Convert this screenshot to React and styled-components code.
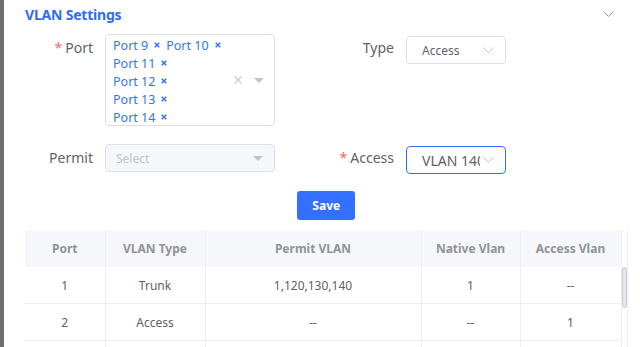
import React from 'react'
import styled, { createGlobalStyle } from 'styled-components';

const GlobalStyle = createGlobalStyle`
  html, body {
    margin: 0;
    padding: 0;
    background: #fff;
    overflow: hidden;
  }
  body {
    font-family: "Noto Sans", "Noto Sans CJK SC", sans-serif;
    color: #606266;
  }
`;

const Page = styled.div`
  display: flex;
  align-items: flex-start;
  min-height: 100vh;
`;

const SideStrip = styled.div`
  width: 4px;
  flex: none;
  align-self: stretch;
  background: #6f6f6f;
`;

const Main = styled.div`
  flex: 1;
  padding: 0 13px 0 21px;
`;

const Header = styled.div`
  height: 28px;
  display: flex;
  align-items: center;
  justify-content: space-between;
  margin-bottom: 6px;
`;

const Title = styled.div`
  font-size: 14px;
  font-weight: 700;
  color: #2f6cf2;
  letter-spacing: -0.2px;
`;

const Collapse = styled.svg`
  width: 11px;
  height: 6px;
  margin-right: 14px;
`;

const Form = styled.div`
  display: grid;
  grid-template-columns: 250px 192px;
  column-gap: 39px;
  row-gap: 18px;
`;

const FormItem = styled.div`
  display: flex;
  align-items: flex-start;
`;

const Label = styled.div`
  width: ${p => p.width}px;
  margin-right: 12px;
  text-align: right;
  font-size: 14px;
  line-height: 28px;
  color: #606266;
  white-space: nowrap;
`;

const Required = styled.span`
  color: #f56c6c;
  margin-right: 3px;
`;

const MultiSelect = styled.div`
  width: 170px;
  height: 92px;
  box-sizing: border-box;
  border: 1px solid #dcdfe6;
  border-radius: 4px;
  display: flex;
  align-items: center;
  padding: 0 10px 0 7px;
`;

const Tags = styled.div`
  width: 116px;
  display: flex;
  flex-wrap: wrap;
  align-self: flex-start;
  padding-top: 1px;
`;

const Tag = styled.span`
  display: inline-flex;
  align-items: center;
  height: 18px;
  font-size: 12.5px;
  color: #3474f0;
  margin-right: 6px;
  white-space: nowrap;
`;

const TagClose = styled.svg`
  width: 6px;
  height: 6px;
  margin-left: 6px;
`;

const Suffix = styled.div`
  margin-left: auto;
  display: flex;
  align-items: center;
  gap: 12px;
`;

const Select = styled.div`
  width: ${p => p.width}px;
  height: 28px;
  margin-top: ${p => p.offset || 0}px;
  box-sizing: border-box;
  border: 1px solid ${p => (p.active ? '#3370ff' : '#dcdfe6')};
  border-radius: 4px;
  background: ${p => (p.disabled ? '#f5f7fa' : '#fff')};
  display: flex;
  align-items: center;
  padding: 0 11px 0 ${p => p.padLeft || 15}px;
`;

const SelectText = styled.span`
  flex: 1;
  min-width: 0;
  margin-right: 3px;
  overflow: hidden;
  white-space: nowrap;
  font-size: ${p => p.size || 12}px;
  color: ${p => (p.placeholder ? '#c0c4cc' : '#606266')};
`;

const Actions = styled.div`
  display: flex;
  justify-content: center;
  margin-top: 17px;
`;

const SaveButton = styled.button`
  width: 58px;
  height: 29px;
  border: none;
  border-radius: 3px;
  background: #3370ff;
  color: #fff;
  font-family: inherit;
  font-size: 12px;
  font-weight: 700;
  padding: 0;
`;

const TableWrap = styled.div`
  display: flex;
  align-items: flex-start;
  margin-top: 10px;
`;

const Table = styled.table`
  width: 596px;
  table-layout: fixed;
  border-collapse: collapse;
  font-size: 12px;
`;

const Th = styled.th`
  height: 37px;
  padding: 0;
  background: #f5f7fa;
  color: #909399;
  font-weight: 700;
  text-align: center;
  border-right: 1px solid #eef0f5;
`;

const Td = styled.td`
  height: 36px;
  padding: 0;
  text-align: center;
  color: #606266;
  border-right: 1px solid #ebeef5;
  border-bottom: 1px solid #ebeef5;
`;

const Gutter = styled.div`
  width: 5px;
  align-self: stretch;
  border-right: 1px solid #eef0f5;
  padding-top: 37px;
`;

const Thumb = styled.div`
  height: 41px;
  box-sizing: border-box;
  border: 1px solid #c9ccd1;
  border-radius: 3px;
  background: #e4e6e9;
`;

const Chevron = ({ color = '#c0c4cc' }) => (
  <svg width="11" height="6" viewBox="0 0 11 6">
    <polyline points="0.5,0.5 5.5,5.5 10.5,0.5" fill="none" stroke={color} strokeWidth="1" />
  </svg>
);

const Caret = () => (
  <svg width="10" height="5" viewBox="0 0 10 5">
    <polygon points="0,0 10,0 5,5" fill="#c0c4cc" />
  </svg>
);

const ClearIcon = () => (
  <svg width="8" height="8" viewBox="0 0 8 8">
    <path d="M0.5 0.5 L7.5 7.5 M7.5 0.5 L0.5 7.5" stroke="#c8cbd1" strokeWidth="1.2" />
  </svg>
);

const ports = ['Port 9', 'Port 10', 'Port 11', 'Port 12', 'Port 13', 'Port 14'];

const rows = [
  { port: '1', type: 'Trunk', permit: '1,120,130,140', native: '1', access: '--' },
  { port: '2', type: 'Access', permit: '--', native: '--', access: '1' },
  { port: '3', type: 'Access', permit: '--', native: '--', access: '1' },
];

export default function App() {
  return (
    <Page>
      <GlobalStyle />
      <SideStrip />
      <Main>
        <Header>
          <Title>VLAN Settings</Title>
          <Collapse viewBox="0 0 11 6">
            <polyline points="0.5,0.5 5.5,5.5 10.5,0.5" fill="none" stroke="#9a9ca3" strokeWidth="1" />
          </Collapse>
        </Header>

        <Form>
          <FormItem>
            <Label width={68}><Required>*</Required>Port</Label>
            <MultiSelect>
              <Tags>
                {ports.map(p => (
                  <Tag key={p}>
                    {p}
                    <TagClose viewBox="0 0 6 6">
                      <path d="M0.7 0.7 L5.3 5.3 M5.3 0.7 L0.7 5.3" stroke="#3474f0" strokeWidth="1.5" />
                    </TagClose>
                  </Tag>
                ))}
              </Tags>
              <Suffix>
                <ClearIcon />
                <Caret />
              </Suffix>
            </MultiSelect>
          </FormItem>
          <FormItem>
            <Label width={80}>Type</Label>
            <Select width={100} offset={2}>
              <SelectText>Access</SelectText>
              <Chevron />
            </Select>
          </FormItem>

          <FormItem>
            <Label width={68}>Permit</Label>
            <Select width={170} disabled padLeft={10}>
              <SelectText placeholder>Select</SelectText>
              <Caret />
            </Select>
          </FormItem>
          <FormItem>
            <Label width={80}><Required>*</Required>Access</Label>
            <Select width={100} offset={2} active>
              <SelectText size={14}>VLAN 140</SelectText>
              <Chevron />
            </Select>
          </FormItem>
        </Form>

        <Actions>
          <SaveButton>Save</SaveButton>
        </Actions>

        <TableWrap>
          <Table>
            <colgroup>
              <col style={{ width: 80 }} />
              <col style={{ width: 100 }} />
              <col style={{ width: 216 }} />
              <col style={{ width: 99 }} />
              <col style={{ width: 101 }} />
            </colgroup>
            <thead>
              <tr>
                <Th>Port</Th>
                <Th>VLAN Type</Th>
                <Th>Permit VLAN</Th>
                <Th>Native Vlan</Th>
                <Th>Access Vlan</Th>
              </tr>
            </thead>
            <tbody>
              {rows.map(r => (
                <tr key={r.port}>
                  <Td>{r.port}</Td>
                  <Td>{r.type}</Td>
                  <Td>{r.permit}</Td>
                  <Td>{r.native}</Td>
                  <Td>{r.access}</Td>
                </tr>
              ))}
            </tbody>
          </Table>
          <Gutter>
            <Thumb />
          </Gutter>
        </TableWrap>
      </Main>
    </Page>
  );
}
